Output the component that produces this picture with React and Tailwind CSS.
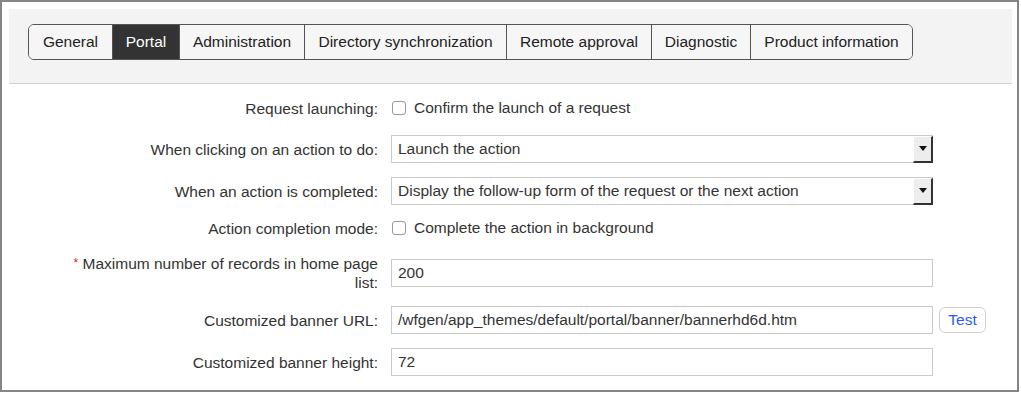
import React from 'react'

const tabs = [
  { label: 'General', w: 'w-[83px]' },
  { label: 'Portal', w: 'w-[67px]', active: true },
  { label: 'Administration', w: 'w-[125px]' },
  { label: 'Directory synchronization', w: 'w-[202px]' },
  { label: 'Remote approval', w: 'w-[145px]' },
  { label: 'Diagnostic', w: 'w-[99px]' },
  { label: 'Product information', w: 'w-[162px]' },
]

const Label = ({ children }) => (
  <div className="ml-[51px] w-[318px] shrink-0 text-right leading-[19px]">{children}</div>
)

const Checkbox = () => (
  <div className="ml-[1px] w-[14px] h-[14px] border border-[#9a9a9a] rounded-[3px] bg-white shrink-0" />
)

const Select = ({ value }) => (
  <div className="w-[542px] h-[28px] border border-[#c9c9c9] flex items-center bg-white">
    <span className="pl-[6px] flex-1">{value}</span>
    <div className="w-[20px] h-[27px] -mr-px bg-[#ededed] border-t border-l border-t-white border-l-white border-r-2 border-b-2 border-r-[#333] border-b-[#333] flex items-center justify-center">
      <svg width="8" height="5" viewBox="0 0 8 5">
        <path d="M0 0 H8 L4 5 Z" fill="#111" />
      </svg>
    </div>
  </div>
)

const Input = ({ value }) => (
  <div className="w-[542px] h-[28px] border border-[#c9c9c9] flex items-center pl-[6px] bg-white">
    {value}
  </div>
)

const App = () => {
  return (
    <div className="w-[1021px] h-[394px] bg-white font-['Liberation_Sans',Arial,sans-serif] text-[15.5px] text-[#333]">
      <div className="w-[1019px] h-[392px] border-2 border-[#858585] pt-[7px] pl-[7px] pr-[5px]">
        <div className="h-[75px] bg-[#f3f3f3] border-b border-[#d2d2d2] pt-[15px] pl-[19px]">
          <div className="flex w-fit h-[36px] border border-[#555] rounded-[6px] overflow-hidden bg-white">
            {tabs.map((t, i) => (
              <div
                key={t.label}
                className={`${t.w} flex items-center justify-center ${i > 0 ? 'border-l border-[#555]' : ''} ${t.active ? 'bg-[#333] text-white' : 'bg-[#f6f6f6] text-[#222]'}`}
              >
                {t.label}
              </div>
            ))}
          </div>
        </div>

        <div className="mt-[10px]">
          <div className="flex items-center h-[28px] gap-[13px]">
            <Label>Request launching:</Label>
            <div className="flex items-center gap-[8px]">
              <Checkbox />
              <span>Confirm the launch of a request</span>
            </div>
          </div>

          <div className="flex items-center mt-[13px] gap-[13px]">
            <Label>When clicking on an action to do:</Label>
            <Select value="Launch the action" />
          </div>

          <div className="flex items-center mt-[14px] gap-[13px]">
            <Label>When an action is completed:</Label>
            <Select value="Display the follow-up form of the request or the next action" />
          </div>

          <div className="flex items-center h-[28px] mt-[9px] gap-[13px]">
            <Label>Action completion mode:</Label>
            <div className="flex items-center gap-[8px]">
              <Checkbox />
              <span>Complete the action in background</span>
            </div>
          </div>

          <div className="flex items-center mt-[12px] gap-[13px]">
            <Label>
              <span className="text-[#e02020] text-[12px] align-top">*</span> Maximum number of records in home page list:
            </Label>
            <Input value="200" />
          </div>

          <div className="flex items-center mt-[14px] gap-[13px]">
            <Label>Customized banner URL:</Label>
            <div className="flex items-center gap-[6px]">
              <Input value="/wfgen/app_themes/default/portal/banner/bannerhd6d.htm" />
              <button className="w-[47px] h-[26px] rounded-[6px] border border-[#cfcfcf] bg-white text-[#1f5bff] flex items-center justify-center">
                Test
              </button>
            </div>
          </div>

          <div className="flex items-center mt-[14px] gap-[13px]">
            <Label>Customized banner height:</Label>
            <Input value="72" />
          </div>
        </div>
      </div>
    </div>
  )
}

export default App
